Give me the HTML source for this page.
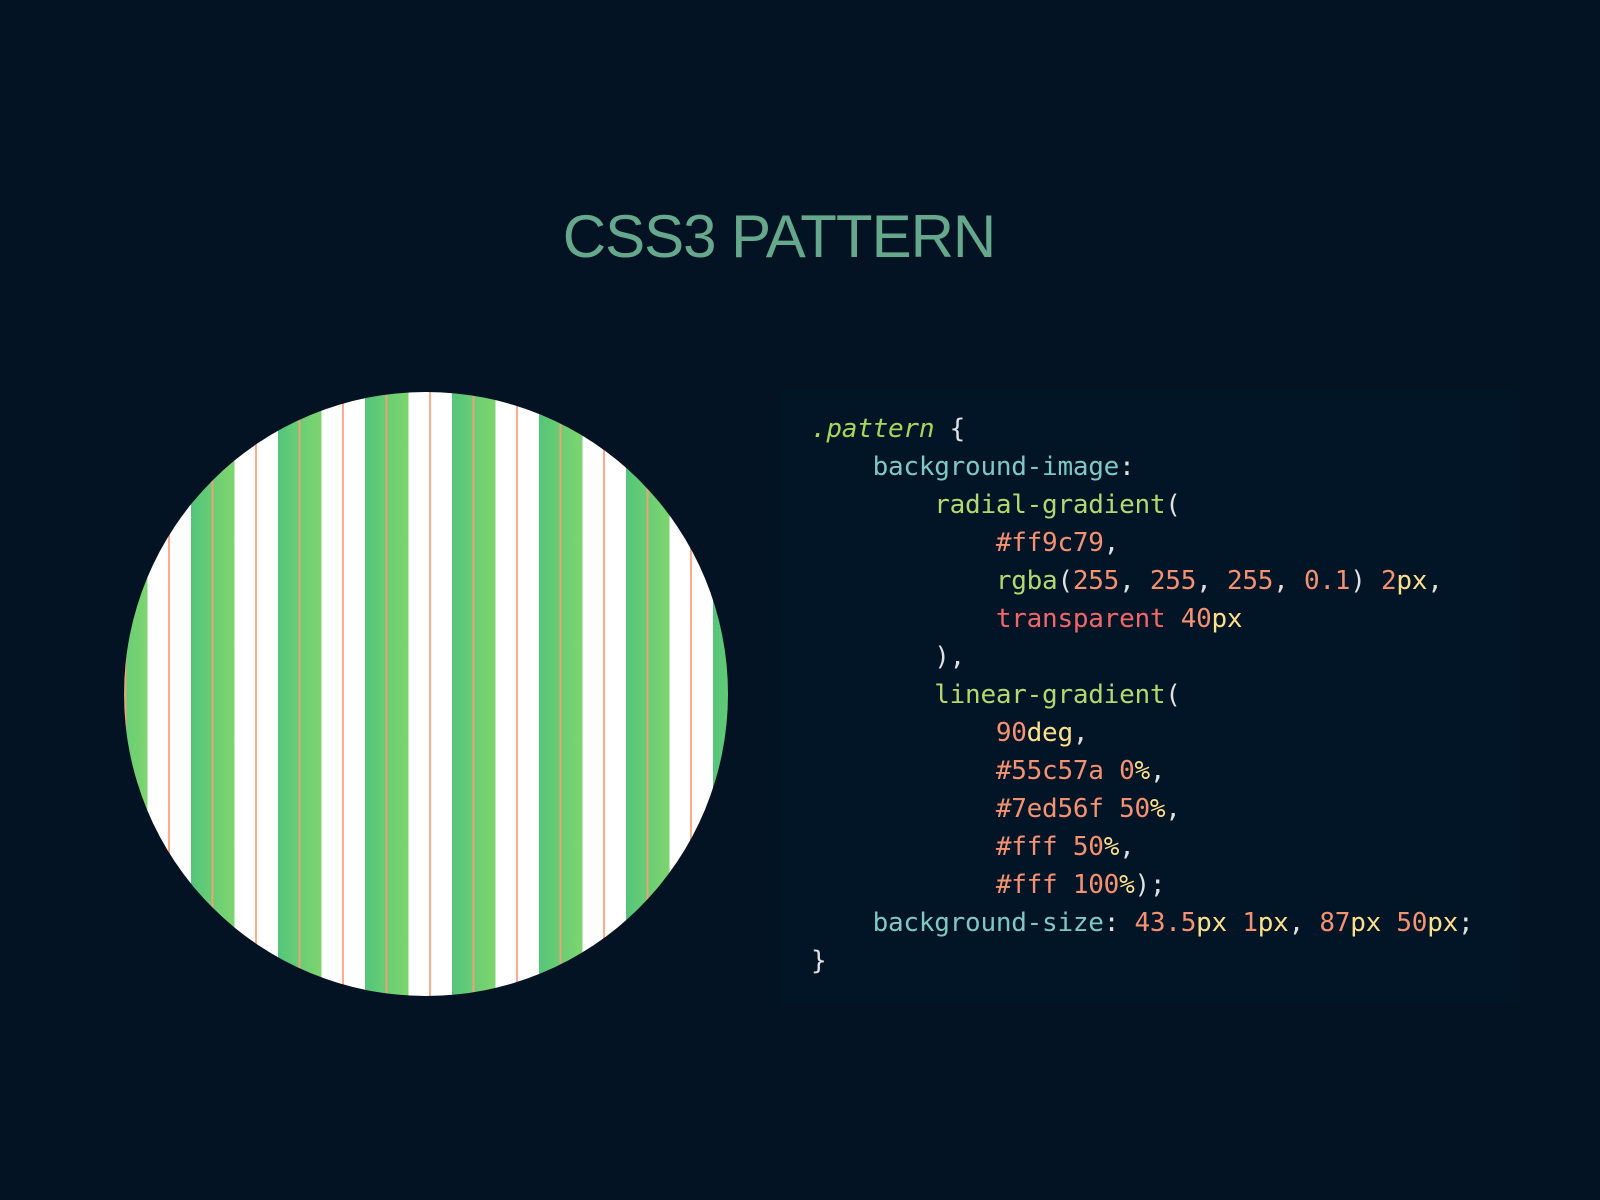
<!DOCTYPE html>
<html><head><meta charset="utf-8"><style>
html,body{margin:0;padding:0;background:#031323;width:1600px;height:1200px;overflow:hidden}
h1{position:absolute;left:0;width:1558px;top:202px;margin:0;text-align:center;font:300 60px "Liberation Sans",sans-serif;letter-spacing:-1px;color:#66a88c}
.pattern{position:absolute;left:124px;top:392px;width:604px;height:604px;border-radius:50%;
background-image:linear-gradient(90deg,transparent 20.5px,rgba(255,156,121,.85) 20.5px,rgba(255,156,121,.85) 22.5px,transparent 22.5px),linear-gradient(90deg,#55c57a 0%,#7ed56f 50%,#fff 50%,#fff 100%);
background-size:43.5px 50px,87px 50px;background-position:-20px 0,-20px 0}
.code{position:absolute;left:780px;top:390px;width:740px;height:615px;background:#021527;border-radius:4px}
pre{position:absolute;left:811px;top:410px;margin:0;font:26px/38px "DejaVu Sans Mono","Liberation Mono",monospace;letter-spacing:-0.25px;color:#e0e0e0}
.s{color:#a6d75b;font-style:italic}.p{color:#80c8c4}.f{color:#b3d870}.n{color:#f59272}.u{color:#ffe08a}.r{color:#f2686a}
</style></head><body>
<h1>CSS3 PATTERN</h1>
<div class="pattern"></div>
<div class="code"></div>
<pre><span class="s">.pattern</span> {
    <span class="p">background-image</span>:
        <span class="f">radial-gradient</span>(
            <span class="n">#ff9c79</span>,
            <span class="f">rgba</span>(<span class="n">255</span>, <span class="n">255</span>, <span class="n">255</span>, <span class="n">0.1</span>) <span class="n">2</span><span class="u">px</span>,
            <span class="r">transparent</span> <span class="n">40</span><span class="u">px</span>
        ),
        <span class="f">linear-gradient</span>(
            <span class="n">90</span><span class="u">deg</span>,
            <span class="n">#55c57a</span> <span class="n">0</span><span class="u">%</span>,
            <span class="n">#7ed56f</span> <span class="n">50</span><span class="u">%</span>,
            <span class="n">#fff</span> <span class="n">50</span><span class="u">%</span>,
            <span class="n">#fff</span> <span class="n">100</span><span class="u">%</span>);
    <span class="p">background-size</span>: <span class="n">43.5</span><span class="u">px</span> <span class="n">1</span><span class="u">px</span>, <span class="n">87</span><span class="u">px</span> <span class="n">50</span><span class="u">px</span>;
}</pre>
</body></html>
